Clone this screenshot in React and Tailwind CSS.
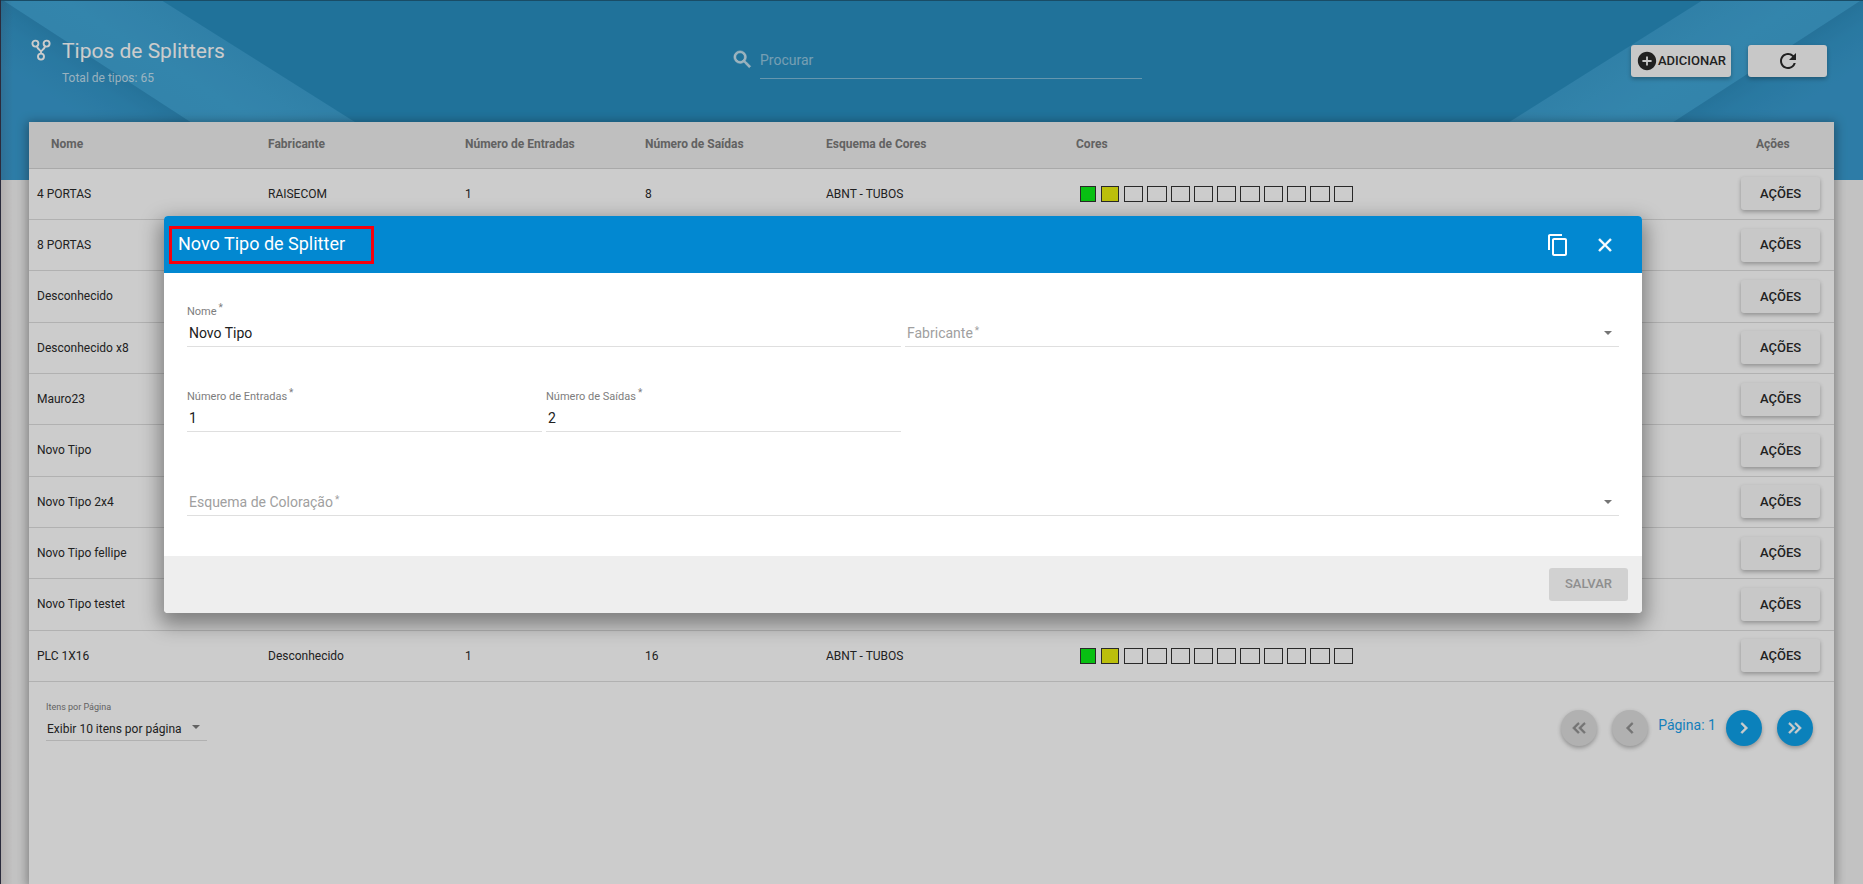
import React from "react";
import {
  MdAddCircle,
  MdChevronLeft,
  MdChevronRight,
  MdClose,
  MdContentCopy,
  MdKeyboardDoubleArrowLeft,
  MdKeyboardDoubleArrowRight,
  MdRefresh,
  MdSearch,
} from "react-icons/md";

const rows = [
  { nome: "4 PORTAS", fabricante: "RAISECOM", entradas: 1, saidas: 8, esquema: "ABNT - TUBOS" },
  { nome: "8 PORTAS" },
  { nome: "Desconhecido" },
  { nome: "Desconhecido x8" },
  { nome: "Mauro23" },
  { nome: "Novo Tipo" },
  { nome: "Novo Tipo 2x4" },
  { nome: "Novo Tipo fellipe" },
  { nome: "Novo Tipo testet" },
  { nome: "PLC 1X16", fabricante: "Desconhecido", entradas: 1, saidas: 16, esquema: "ABNT - TUBOS" },
];

function SplitterIcon() {
  return (
    <svg viewBox="0 0 20 22" className="h-[22px] w-5" fill="none" stroke="currentColor" strokeWidth="1.9" aria-hidden="true">
      <circle cx="4.4" cy="4.6" r="3" />
      <circle cx="15.6" cy="4.6" r="3" />
      <circle cx="10" cy="17.6" r="3" />
      <path d="M5.8 7.2C6.4 9.4 8 10.4 10 12.4 12 10.4 13.6 9.4 14.2 7.2M10 11.6V14.6" />
    </svg>
  );
}

function Caret({ className }) {
  return (
    <svg viewBox="0 0 8 4" className={"pointer-events-none absolute h-1 w-2 fill-[#757575] " + className} aria-hidden="true">
      <path d="M0 0h8L4 4z" />
    </svg>
  );
}

function Bands({ className }) {
  return (
    <svg viewBox="0 0 460 180" className={"h-[180px] w-[460px] shrink-0 " + className} aria-hidden="true">
      <path d="M0 0H160L446 180H0Z" fill="url(#band)" />
      <path d="M0 -1L279 180H0Z" fill="url(#corner)" />
    </svg>
  );
}

function Backdrop() {
  return (
    <div className="absolute inset-x-0 top-0 flex h-[180px] justify-between overflow-hidden bg-[#208bbf]">
      <svg className="absolute h-0 w-0" aria-hidden="true">
        <defs>
          <linearGradient id="band" gradientUnits="userSpaceOnUse" x1="240" y1="50" x2="185" y2="138">
            <stop offset="0" stopColor="#359dd0" />
            <stop offset="0.5" stopColor="#39a3d6" />
            <stop offset="1" stopColor="#38a1d4" />
          </linearGradient>
          <linearGradient id="corner" gradientUnits="userSpaceOnUse" x1="100" y1="63" x2="70" y2="110">
            <stop offset="0" stopColor="#278bbe" />
            <stop offset="0.4" stopColor="#2c93c8" />
            <stop offset="1" stopColor="#3198cf" />
          </linearGradient>
        </defs>
      </svg>
      <Bands className="" />
      <Bands className="-scale-x-100" />
    </div>
  );
}

function Swatches() {
  return (
    <div className="flex gap-[5px] pl-1">
      <span className="h-4 w-4 border border-[#2a2a2a] bg-[#00f00d]" />
      <span className="h-4 w-[18px] border border-[#2a2a2a] bg-[#e9ee04]" />
      <div className="grid w-[229px] grid-cols-10 gap-1">
        {Array.from({ length: 10 }, (_, i) => (
          <span key={i} className="h-4 border border-[#2a2a2a]" />
        ))}
      </div>
    </div>
  );
}

const raised = "shadow-[0_2px_4px_rgba(0,0,0,0.3)]";
const boldIcon = "[&_path]:[stroke-width:0.7px] [&_path[fill=none]]:stroke-none";

function RoundButton({ label, disabled, children }) {
  return (
    <button
      type="button"
      aria-label={label}
      disabled={disabled}
      className={
        "flex h-9 w-9 items-center justify-center rounded-full bg-[#049ee9] text-[22px] text-white shadow-[0_2px_4px_rgba(0,0,0,0.3)] disabled:bg-[#dcdcdc] disabled:text-[#8c8c8c] " +
        boldIcon
      }
    >
      {children}
    </button>
  );
}

function Star() {
  return <span className="relative -top-1 ml-0.5 text-[10px]">*</span>;
}

function TextField({ id, label, value }) {
  return (
    <div className="flex min-w-0 flex-1 flex-col">
      <label htmlFor={id} className="h-4 text-[11px] leading-[18px] text-[#7d7d7d]">
        {label}
        <Star />
      </label>
      <input
        id={id}
        defaultValue={value}
        className="h-7 w-full border-b border-[#dfdfdf] bg-transparent px-0.5 text-sm text-[#212121] outline-none"
      />
    </div>
  );
}

function SelectField({ id, label }) {
  return (
    <div className="relative min-w-0 flex-1 pt-4">
      <label htmlFor={id} className="pointer-events-none absolute bottom-0.5 left-0.5 text-sm leading-5 text-[#a0a0a0]">
        {label}
        <Star />
      </label>
      <select id={id} defaultValue="" className="block h-7 w-full appearance-none border-b border-[#dfdfdf] bg-transparent outline-none">
        <option value="" />
      </select>
      <Caret className="right-[7px] bottom-3" />
    </div>
  );
}

function Dialog() {
  return (
    <section
      role="dialog"
      aria-labelledby="dialog-title"
      className="w-full overflow-hidden rounded bg-white shadow-[0_8px_20px_4px_rgba(0,0,0,0.38)]"
    >
      <header className="flex h-[57px] items-center justify-between bg-[#0288d1] pr-[26px] pl-[5px] text-white">
        <h2 id="dialog-title" className="h-[38px] w-[205px] border-3 border-[#f7000c] pl-1.5 text-lg leading-[30px]">
          Novo Tipo de Splitter
        </h2>
        <div className="flex items-center gap-6 text-2xl">
          <button type="button" aria-label="Copiar">
            <MdContentCopy />
          </button>
          <button type="button" aria-label="Fechar" className={"text-[22px] " + boldIcon}>
            <MdClose />
          </button>
        </div>
      </header>
      <form>
        <div className="px-[23px] pt-[30px] pb-10">
          <div className="flex gap-1">
            <TextField id="nome" label="Nome" value="Novo Tipo" />
            <SelectField id="fabricante" label="Fabricante" />
          </div>
          <div className="mt-[41px] flex gap-1">
            <div className="flex flex-1 gap-1">
              <TextField id="entradas" label="Número de Entradas" value="1" />
              <TextField id="saidas" label="Número de Saídas" value="2" />
            </div>
            <div className="flex-1" />
          </div>
          <div className="mt-10 flex">
            <SelectField id="esquema" label="Esquema de Coloração" />
          </div>
        </div>
        <footer className="flex h-[57px] items-center justify-end bg-[#eeeeee] pr-3.5">
          <button type="submit" disabled className="h-[33px] w-[79px] rounded-[3px] bg-[#d1d1d1] pb-0.5 text-[13px] font-medium text-[#8e8e8e]">
            SALVAR
          </button>
        </footer>
      </form>
    </section>
  );
}

export default function App() {
  return (
    <div className="relative flex min-h-screen flex-col border-l border-[#2b2b3c] bg-[#f3f3f3] font-['Roboto',sans-serif] text-[#212121]">
      <Backdrop />
      <div className="absolute inset-y-0 left-0 w-3 bg-linear-to-r from-[#401010]/12 to-transparent" />
      <header className="relative flex h-[122px] items-start justify-between border-t border-[#17597b] pr-9 pl-[30px] text-white">
        <div className="flex w-[211px] gap-[11px] pt-9">
          <span className="pt-0.5">
            <SplitterIcon />
          </span>
          <div>
            <h1 className="text-[21px] leading-7 whitespace-nowrap">Tipos de Splitters</h1>
            <p className="mt-[3px] text-xs leading-5 text-white/70">Total de tipos: 65</p>
          </div>
        </div>
        <div className="flex items-center gap-1.5 pt-[39px]">
          <MdSearch className={"text-[23px] text-white/70 " + boldIcon} aria-hidden="true" />
          <input
            aria-label="Procurar"
            placeholder="Procurar"
            className="h-[39px] w-[382px] border-b border-white/40 bg-transparent pt-0.5 text-sm outline-none placeholder:text-white/50"
          />
        </div>
        <div className="flex gap-[17px] pt-11 text-[#212121]">
          <button type="button" className={"flex h-8 w-[100px] items-center justify-center rounded-[3px] bg-[#fafafa] text-[13px] font-medium " + raised}>
            <MdAddCircle className="text-[22px]" />
            ADICIONAR
          </button>
          <button type="button" aria-label="Atualizar" className={"flex h-8 w-[79px] items-center justify-center rounded-[3px] bg-[#fafafa] text-2xl " + raised}>
            <MdRefresh />
          </button>
        </div>
      </header>

      <main className="relative mr-[29px] ml-7 flex-1 bg-white shadow-[0_2px_10px_2px_rgba(0,0,0,0.35)]">
        <table className="h-[560px] w-full table-fixed border-collapse text-left text-xs">
          <colgroup>
            <col className="w-[231px]" />
            <col className="w-[197px]" />
            <col className="w-[180px]" />
            <col className="w-[181px]" />
            <col className="w-[250px]" />
            <col />
            <col className="w-[100px]" />
          </colgroup>
          <thead>
            <tr className="h-[46px] border-b border-[#d2d2d2] bg-[#eeeeee] text-[#757575] [&>th]:pb-0.5 [&>th]:pl-2 [&>th]:font-bold">
              <th>
                <span className="pl-3.5">Nome</span>
              </th>
              <th>Fabricante</th>
              <th>Número de Entradas</th>
              <th>Número de Saídas</th>
              <th>Esquema de Cores</th>
              <th>Cores</th>
              <th>
                <span className="pl-3.5">Ações</span>
              </th>
            </tr>
          </thead>
          <tbody>
            {rows.map((r) => (
              <tr key={r.nome} className="border-b border-[#dcdcdc] [&>td]:pl-2 [&>td:last-child]:pl-[7px]">
                <td>{r.nome}</td>
                <td>{r.fabricante}</td>
                <td>{r.entradas}</td>
                <td>{r.saidas}</td>
                <td>{r.esquema}</td>
                <td>{r.esquema && <Swatches />}</td>
                <td>
                  <button type="button" className={"block h-[33px] w-[79px] rounded-[3px] bg-[#fafafa] text-[13px] font-medium " + raised}>
                    AÇÕES
                  </button>
                </td>
              </tr>
            ))}
          </tbody>
        </table>
        <div className="flex items-start justify-between pr-[21px] pl-[17px]">
          <div className="relative w-[161px] pt-[17px]">
            <label htmlFor="itens" className="block text-[9px] leading-4 text-[#757575]">
              Itens por Página
            </label>
            <select id="itens" className="block h-[26px] w-full appearance-none border-b border-[#dcdcdc] bg-transparent pt-0.5 pl-px text-xs outline-none">
              <option>Exibir 10 itens por página</option>
            </select>
            <Caret className="right-[7px] bottom-3" />
          </div>
          <nav aria-label="Paginação" className="flex pt-7">
            <div className="flex gap-[15px]">
              <RoundButton label="Primeira página" disabled>
                <MdKeyboardDoubleArrowLeft />
              </RoundButton>
              <RoundButton label="Página anterior" disabled>
                <MdChevronLeft />
              </RoundButton>
            </div>
            <span className="w-[78px] pt-[5px] text-center text-sm leading-5 text-[#0f9bea]">Página: 1</span>
            <div className="flex gap-[15px]">
              <RoundButton label="Próxima página">
                <MdChevronRight />
              </RoundButton>
              <RoundButton label="Última página">
                <MdKeyboardDoubleArrowRight />
              </RoundButton>
            </div>
          </nav>
        </div>
      </main>

      <div className="absolute inset-0 flex items-start bg-[#212121]/23 pt-[216px] pr-[221px] pl-[163px]">
        <Dialog />
      </div>
    </div>
  );
}
